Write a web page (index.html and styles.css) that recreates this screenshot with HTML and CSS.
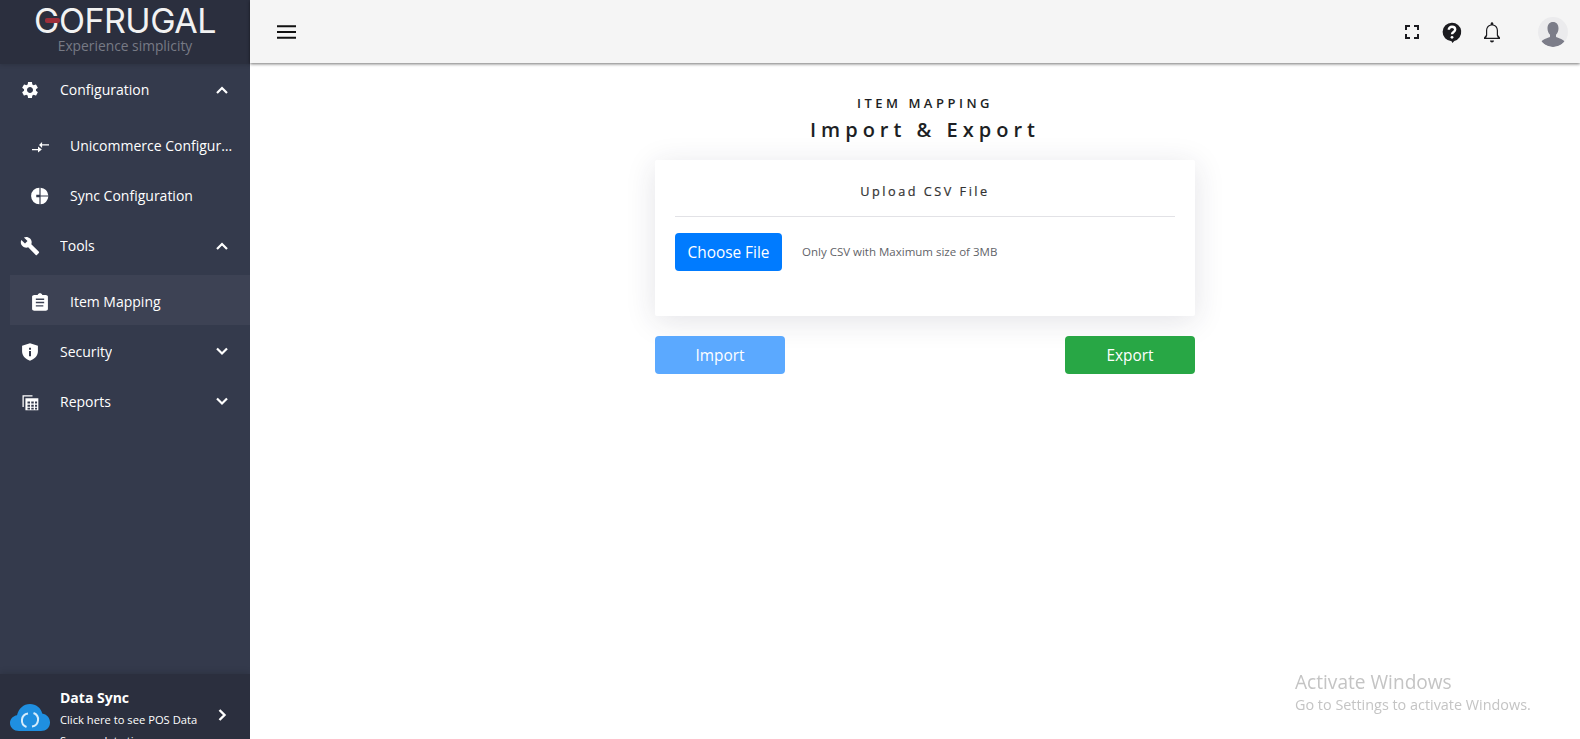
FILE: index.html
```html
<!DOCTYPE html>
<html lang="en">
<head>
<meta charset="utf-8">
<title>Item Mapping</title>
<link rel="stylesheet" href="styles.css">
</head>
<body>
<div class="app">
  <aside class="sidebar">
    <div class="brand">
      <div class="logo"><span class="logo-bar"></span>GOFRUGAL</div>
      <div class="tagline">Experience simplicity</div>
    </div>
    <nav class="nav">
      <a class="row">
        <svg class="ico" viewBox="0 0 24 24"><path d="M19.14 12.94c.04-.3.06-.61.06-.94 0-.32-.02-.64-.07-.94l2.03-1.58c.18-.14.23-.41.12-.61l-1.92-3.32c-.12-.22-.37-.29-.59-.22l-2.39.96c-.5-.38-1.03-.7-1.62-.94l-.36-2.54c-.04-.24-.24-.41-.48-.41h-3.84c-.24 0-.43.17-.47.41l-.36 2.54c-.59.24-1.13.57-1.62.94l-2.39-.96c-.22-.08-.47 0-.59.22L2.74 8.87c-.12.21-.08.47.12.61l2.03 1.58c-.05.3-.09.63-.09.94s.02.64.07.94l-2.03 1.58c-.18.14-.23.41-.12.61l1.92 3.32c.12.22.37.29.59.22l2.39-.96c.5.38 1.03.7 1.62.94l.36 2.54c.05.24.24.41.48.41h3.84c.24 0 .44-.17.47-.41l.36-2.54c.59-.24 1.13-.56 1.62-.94l2.39.96c.22.08.47 0 .59-.22l1.92-3.32c.12-.22.07-.47-.12-.61l-2.01-1.58zM12 15.6c-1.98 0-3.6-1.62-3.6-3.6s1.62-3.6 3.6-3.6 3.6 1.62 3.6 3.6-1.62 3.6-3.6 3.6z"/></svg>
        <span class="label">Configuration</span>
        <svg class="chev" viewBox="0 0 14 14"><path d="M2 11 7 6l5 5"/></svg>
      </a>
      <div class="sub">
        <a class="row subrow">
          <svg class="ico" viewBox="0 0 24 24"><path d="M14.500 7.200 10.800 10.800l3.700 3.600V11.500h8.300V10h-8.300z"/><path d="M9.600 12.600 14.200 16.200l-4.600 3.600V17H2.400v-1.500h7.200z"/></svg>
          <span class="label">Unicommerce Configuration</span>
        </a>
        <a class="row subrow">
          <svg class="ico" viewBox="0 0 24 24"><path d="M11.300 2v8.600H7.500v2.800h3.800V22a10 10 0 0 1 0-20zM12.700 2a10 10 0 0 1 9.300 9.300h-9.300zM12.700 12.700H22a10 10 0 0 1-9.300 9.300z"/></svg>
          <span class="label">Sync Configuration</span>
        </a>
      </div>
      <a class="row">
        <svg class="ico" viewBox="0 0 24 24"><path d="M22.7 19l-9.1-9.1c.9-2.3.4-5-1.5-6.9-2-2-5-2.4-7.4-1.3L9 6 6 9 1.6 4.700C.4 7.100.9 10.100 2.900 12.100c1.900 1.900 4.600 2.400 6.900 1.500l9.100 9.100c.4.4 1 .4 1.400 0l2.300-2.300c.5-.4.5-1.100.1-1.400z"/></svg>
        <span class="label">Tools</span>
        <svg class="chev" viewBox="0 0 14 14"><path d="M2 11 7 6l5 5"/></svg>
      </a>
      <div class="sub sub-active">
        <a class="row subrow active">
          <svg class="ico" viewBox="0 0 24 24"><path d="M19 3.500h-4.200C14.400 2.300 13.300 1.500 12 1.500s-2.400.8-2.800 2H5c-1.100 0-2.500.9-2.500 2v15c0 1.100 1.400 2 2.500 2h14c1.100 0 2.500-.9 2.500-2v-15c0-1.100-1.400-2-2.500-2zm-3 14H7v-1.700h9zm1-4H7v-1.700h10zm0-4H7V7.800h10z"/></svg>
          <span class="label">Item Mapping</span>
        </a>
      </div>
      <a class="row">
        <svg class="ico" viewBox="0 0 24 24"><path fill-rule="evenodd" d="M12 1.500 21.500 4.500v7c0 5-4.400 9.500-9.500 11-5.100-1.500-9.500-6-9.500-11v-7zM10.800 6.800v2.400h2.400V6.800zm0 4v6.400h2.400v-6.400z"/></svg>
        <span class="label">Security</span>
        <svg class="chev" viewBox="0 0 14 14"><path d="M2 4.500 7 9.500l5-5"/></svg>
      </a>
      <a class="row">
        <svg class="ico" viewBox="0 0 24 24"><path d="M3 4h12v1.500H4.500V18H3z"/><path fill-rule="evenodd" d="M6.500 7.500H22V22H6.500zM9 11.500v2.300h3v-2.300zm4.500 0v2.300h3v-2.300zm4.500 0v2.300h2.500v-2.300zM9 15.300v2.300h3v-2.300zm4.500 0v2.300h3v-2.300zm4.500 0v2.300h2.500v-2.300zM9 19v2h3v-2zm4.500 0v2h3v-2zm4.500 0v2h2.500v-2z"/></svg>
        <span class="label">Reports</span>
        <svg class="chev" viewBox="0 0 14 14"><path d="M2 4.500 7 9.500l5-5"/></svg>
      </a>
    </nav>
    <div class="sync">
      <svg class="cloud" viewBox="0 0 40 27"><path fill="#1f8fe0" d="M9 27C4 27 0 23.500 0 19c0-4 3-7.200 7-7.800C8.500 4.800 13.500 0 20 0c6 0 11 4 12.200 9.500 4.500.7 7.800 4.500 7.800 9C40 23.500 36 27 31 27z"/><path class="cloud-arrows" d="M18 9.500a7 7 0 0 0-1.500 13.500M22 22.500a7 7 0 0 0 1.500-13.500"/></svg>
      <div class="sync-text">
        <div class="sync-title">Data Sync</div>
        <div class="sync-desc">Click here to see POS Data Sync update time</div>
      </div>
      <svg class="chev sync-chev" viewBox="0 0 14 14"><path d="M4.500 2 9.500 7l-5 5"/></svg>
    </div>
  </aside>
  <div class="content">
    <header class="topbar">
      <svg class="burger" viewBox="0 0 20 14"><path d="M0 1h20M0 7h20M0 13h20"/></svg>
      <div class="top-icons">
        <svg class="tico" viewBox="0 0 24 24"><path d="M7 14H5v5h5v-2H7v-3zm-2-4h2V7h3V5H5v5zm12 7h-3v2h5v-5h-2v3zM14 5v2h3v3h2V5h-5z"/></svg>
        <svg class="tico help" viewBox="0 0 24 24"><path d="M12 2a10 10 0 0 1 2.500 19.700L12.500 24l-1-2A10 10 0 0 1 12 2z"/><path class="q" d="M8.500 9.500C8.500 7.500 10 6.200 12 6.200s3.500 1.300 3.500 3c0 2.800-3.500 2.600-3.500 5.300"/><circle class="qdot" cx="12" cy="17.800" r="1.500"/></svg>
        <svg class="tico" viewBox="0 0 24 24"><path d="M12 22.500c1.100 0 2-.9 2-2h-4c0 1.100.9 2 2 2zm8-5-2-2.500v-4.500c0-3-1.800-5.400-4.700-6V3.500c0-.7-.6-1.300-1.300-1.300s-1.300.6-1.300 1.300v1c-2.900.6-4.700 3-4.700 6V15l-2 2.500V19h16zM6.200 17.800 7.200 15.500v-5c0-2.800 1.900-5 4.800-5s4.800 2.200 4.800 5v5l1 2.300z"/></svg>
        <div class="avatar">
          <svg viewBox="0 0 30 30"><path fill="#7c7d89" d="M15 5c3.500 0 5.500 2.500 5.500 6.500 0 2.500-1 5-2.500 6.300v2c1 1.200 6.500 1.800 8.500 4.700a14.700 14.700 0 0 1-23 0c2-2.900 7.500-3.500 8.500-4.700v-2c-1.500-1.300-2.500-3.800-2.500-6.300C9.500 7.500 11.500 5 15 5z"/></svg>
        </div>
      </div>
    </header>
    <main class="main">
      <div class="panel">
        <p class="eyebrow">ITEM MAPPING</p>
        <h1 class="title">Import &amp; Export</h1>
        <section class="card">
          <h2 class="card-title">Upload CSV File</h2>
          <div class="file-row">
            <button class="btn btn-blue">Choose File</button>
            <span class="hint">Only CSV with Maximum size of 3MB</span>
          </div>
        </section>
        <div class="actions">
          <button class="btn wide btn-faded">Import</button>
          <button class="btn wide btn-green">Export</button>
        </div>
      </div>
    </main>
  </div>
</div>
<div class="activate">
  <div class="activate-title">Activate Windows</div>
  <div class="activate-sub">Go to Settings to activate Windows.</div>
</div>
</body>
</html>
```
FILE: styles.css
```css
* { box-sizing: border-box; }
html, body { margin: 0; height: 100%; overflow: hidden; }
body { font-family: "Open Sans", "Noto Sans", sans-serif; background: #fff; color: #212529; }
.app { display: flex; height: 739px; }

.sidebar { width: 250px; flex: none; background: #343a4c; display: flex; flex-direction: column; color: #fff; overflow: hidden; }
.brand { height: 64px; flex: none; background: #2b2f3e; text-align: center; box-shadow: 0 1px 4px rgba(0,0,0,.15); position: relative; }
.logo { position: relative; font-family: "Inter", sans-serif; font-weight: 400; font-size: 34px; line-height: 24px; padding-top: 9px; letter-spacing: -.5px; color: #f2f2f2; }
.logo-bar { position: absolute; left: 45px; top: 18px; width: 15px; height: 5px; background: #9d2f3b; border-radius: 2px; }
.tagline { font-size: 13.800px; line-height: 16px; margin-top: 5px; color: #777a85; }

.nav { flex: 1; }
.row { display: flex; align-items: center; height: 50px; padding-left: 20px; font-size: 14px; color: #fff; }
.ico { width: 20px; height: 20px; flex: none; fill: #fff; margin-top: 2px; }
.label { margin-left: 20px; white-space: nowrap; overflow: hidden; text-overflow: ellipsis; }
.chev { width: 14px; height: 14px; flex: none; margin-left: auto; margin-right: 21px; fill: none; stroke: #fff; stroke-width: 2.200; }
.sub { margin-top: 6px; padding-left: 10px; }
.sub-active { margin-top: 5px; margin-bottom: 1px; }
.subrow { padding-left: 20px; }
.subrow .label { margin-left: 20px; width: 165px; }
.active { background: #3d4254; padding-top: 3px; }
.active .ico { margin-top: 0; }

.sync { height: 65px; flex: none; background: #2b2f3e; display: flex; align-items: flex-start; padding: 14px 0 0 10px; box-shadow: 0 -2px 6px rgba(0,0,0,.12); }
.cloud { width: 40px; height: 27px; flex: none; margin-top: 16px; }
.cloud-arrows { fill: none; stroke: #d5ecfb; stroke-width: 2; }
.sync-text { width: 145px; margin-left: 10px; }
.sync-title { font-size: 14px; font-weight: 700; line-height: 20px; }
.sync-desc { font-size: 11.200px; line-height: 21px; margin-top: 1px; }
.sync-chev { margin: 20px 0 0 10px; stroke-width: 2.400; }

.content { flex: 1; display: flex; flex-direction: column; min-width: 0; }
.topbar { height: 63px; flex: none; background: #f5f5f5; display: flex; align-items: center; justify-content: space-between; padding: 0 12px 0 27px; box-shadow: 0 1px 3px rgba(0,0,0,.55); position: relative; }
.burger { width: 19px; height: 14px; fill: none; stroke: #111; stroke-width: 2; }
.top-icons { display: flex; align-items: center; }
.tico { width: 24px; height: 24px; fill: #1b1b1f; margin-right: 17px; }
.help { width: 22px; height: 22px; }
.q { fill: none; stroke: #fff; stroke-width: 2.600; }
.qdot { fill: #fff; }
.avatar { width: 30px; height: 30px; border-radius: 50%; background: #ebebed; overflow: hidden; margin-left: 17px; }
.avatar svg { display: block; width: 30px; height: 30px; }

.main { flex: 1; padding-left: 20px; display: flex; justify-content: center; }
.panel { width: 540px; padding-top: 32px; text-align: center; }
.eyebrow { margin: 0; font-size: 13px; font-weight: 600; letter-spacing: 3.500px; line-height: 16px; color: #1d1f24; }
.title { margin: 6px 0 0; font-size: 20px; font-weight: 600; letter-spacing: 5px; line-height: 26px; color: #1d1f24; }
.card { margin-top: 17px; height: 156px; background: #fff; padding: 20px; box-shadow: 0 5px 30px rgba(40,40,70,.13); border-radius: 2px; }
.card-title { margin: 0; font-size: 12.700px; font-weight: 400; -webkit-text-stroke: .2px #333; letter-spacing: 2.500px; line-height: 22px; color: #333; padding-bottom: 14px; border-bottom: 1px solid #e2e2e6; }
.file-row { display: flex; align-items: center; margin-top: 16px; }
.btn { font-family: inherit; border: 0; border-radius: 4px; color: #fff; font-size: 15.400px; height: 38px; padding: 0; }
.btn-blue { width: 107px; background: #007bff; }
.hint { margin-left: 20px; margin-bottom: 2px; font-size: 11.500px; color: #5f6368; }
.actions { display: flex; justify-content: space-between; margin-top: 20px; }
.wide { width: 130px; }
.btn-faded { background: #5ba9ff; }
.btn-green { background: #28a745; }

.activate { position: fixed; left: 1295px; top: 670px; color: #c4c4c4; }
.activate-title { font-size: 19.100px; line-height: 25px; }
.activate-sub { font-size: 14.400px; line-height: 20px; }
```
